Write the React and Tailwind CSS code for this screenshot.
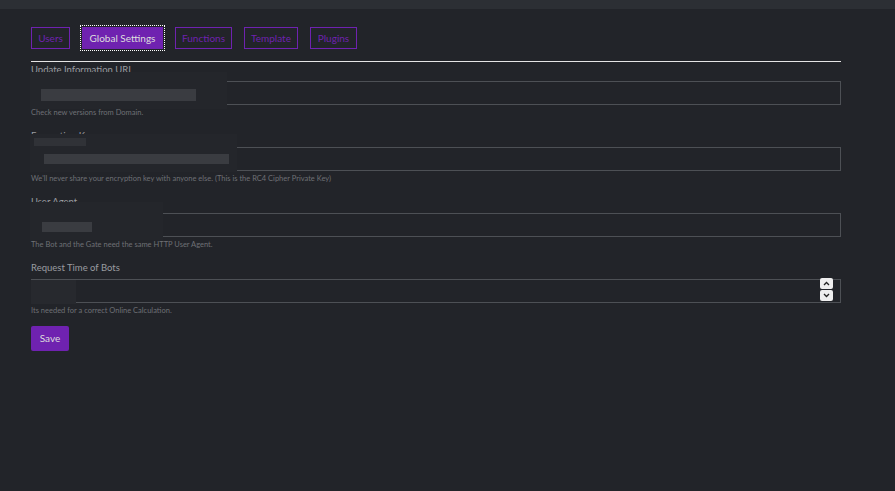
export default function App() {
  const F = { fontFamily: 'Lato, "Noto Sans", sans-serif' };
  const tab = "h-[22px] border border-[#6f22b0] text-[#6f22b0] text-[10px] leading-none flex items-center justify-center";
  const Field = ({ label, help, children, mt }) => (
    <div className={mt}>
      <div className="text-[9.5px] text-[#9a9ca0] h-[12px] leading-[12px]">{label}</div>
      <div className="relative mt-[5px] h-[24px] border border-[#4d5055]">{children}</div>
      <div className="text-[7.5px] text-[#6e7075] mt-[3px] h-[10px] leading-[10px]">{help}</div>
    </div>
  );
  return (
    <div style={F} className="w-[895px] h-[491px] bg-[#222429] overflow-hidden">
      <div className="h-[9px] bg-[#2c2f34]" />
      <div className="px-[31px] w-[872px]">
        <div className="flex gap-[12px] mt-[18px]">
          <div className={tab + " w-[39px]"}>Users</div>
          <div className="w-[81px] h-[22px] bg-[#6f22b0] text-[#ddd] text-[10px] flex items-center justify-center outline outline-1 outline-dotted outline-white outline-offset-1">Global Settings</div>
          <div className={tab + " w-[57px]"}>Functions</div>
          <div className={tab + " w-[54px]"}>Template</div>
          <div className={tab + " w-[47px]"}>Plugins</div>
        </div>
        <div className="h-[1px] bg-[#e5e5e5] mt-[12px]" />
        <Field mt="mt-[2px]" label="Update Information URL" help="Check new versions from Domain.">
          <div className="absolute left-[-2px] top-[-10px] w-[197px] h-[37px] bg-[#24262b]" />
          <div className="absolute left-[9px] top-[7px] w-[155px] h-[12px] bg-[#3a3c41]" />
        </Field>
        <Field mt="mt-[12px]" label="Encryption Key" help="We'll never share your encryption key with anyone else. (This is the RC4 Cipher Private Key)">
          <div className="absolute left-[-2px] top-[-14px] w-[207px] h-[38px] bg-[#24262b]" />
          <div className="absolute left-[2px] top-[-10px] w-[52px] h-[8px] bg-[#303237]" />
          <div className="absolute left-[12px] top-[6px] w-[185px] h-[10px] bg-[#3a3c41]" />
        </Field>
        <Field mt="mt-[12px]" label="User Agent" help="The Bot and the Gate need the same HTTP User Agent.">
          <div className="absolute left-[-2px] top-[-12px] w-[133px] h-[38px] bg-[#24262b]" />
          <div className="absolute left-[10px] top-[8px] w-[50px] h-[10px] bg-[#3a3c41]" />
        </Field>
        <Field mt="mt-[12px]" label="Request Time of Bots" help="Its needed for a correct Online Calculation.">
          <div className="absolute left-[-1px] top-[0px] w-[45px] h-[24px] bg-[#27292e]" />
          <div className="absolute right-[7px] top-[-2px] flex flex-col gap-[1px]">
            <div className="w-[13px] h-[11px] bg-[#eee] rounded-[2px] flex items-center justify-center">
              <svg width="7" height="5" viewBox="0 0 7 5"><path d="M1 4 L3.5 1.5 L6 4" stroke="#222" strokeWidth="1.3" fill="none"/></svg>
            </div>
            <div className="w-[13px] h-[11px] bg-[#eee] rounded-[2px] flex items-center justify-center">
              <svg width="7" height="5" viewBox="0 0 7 5"><path d="M1 1 L3.5 3.5 L6 1" stroke="#222" strokeWidth="1.3" fill="none"/></svg>
            </div>
          </div>
        </Field>
        <div className="mt-[10px] w-[38px] h-[25px] bg-[#6f22b0] rounded-[2px] text-[#ddd] text-[10px] flex items-center justify-center">Save</div>
      </div>
    </div>
  );
}
